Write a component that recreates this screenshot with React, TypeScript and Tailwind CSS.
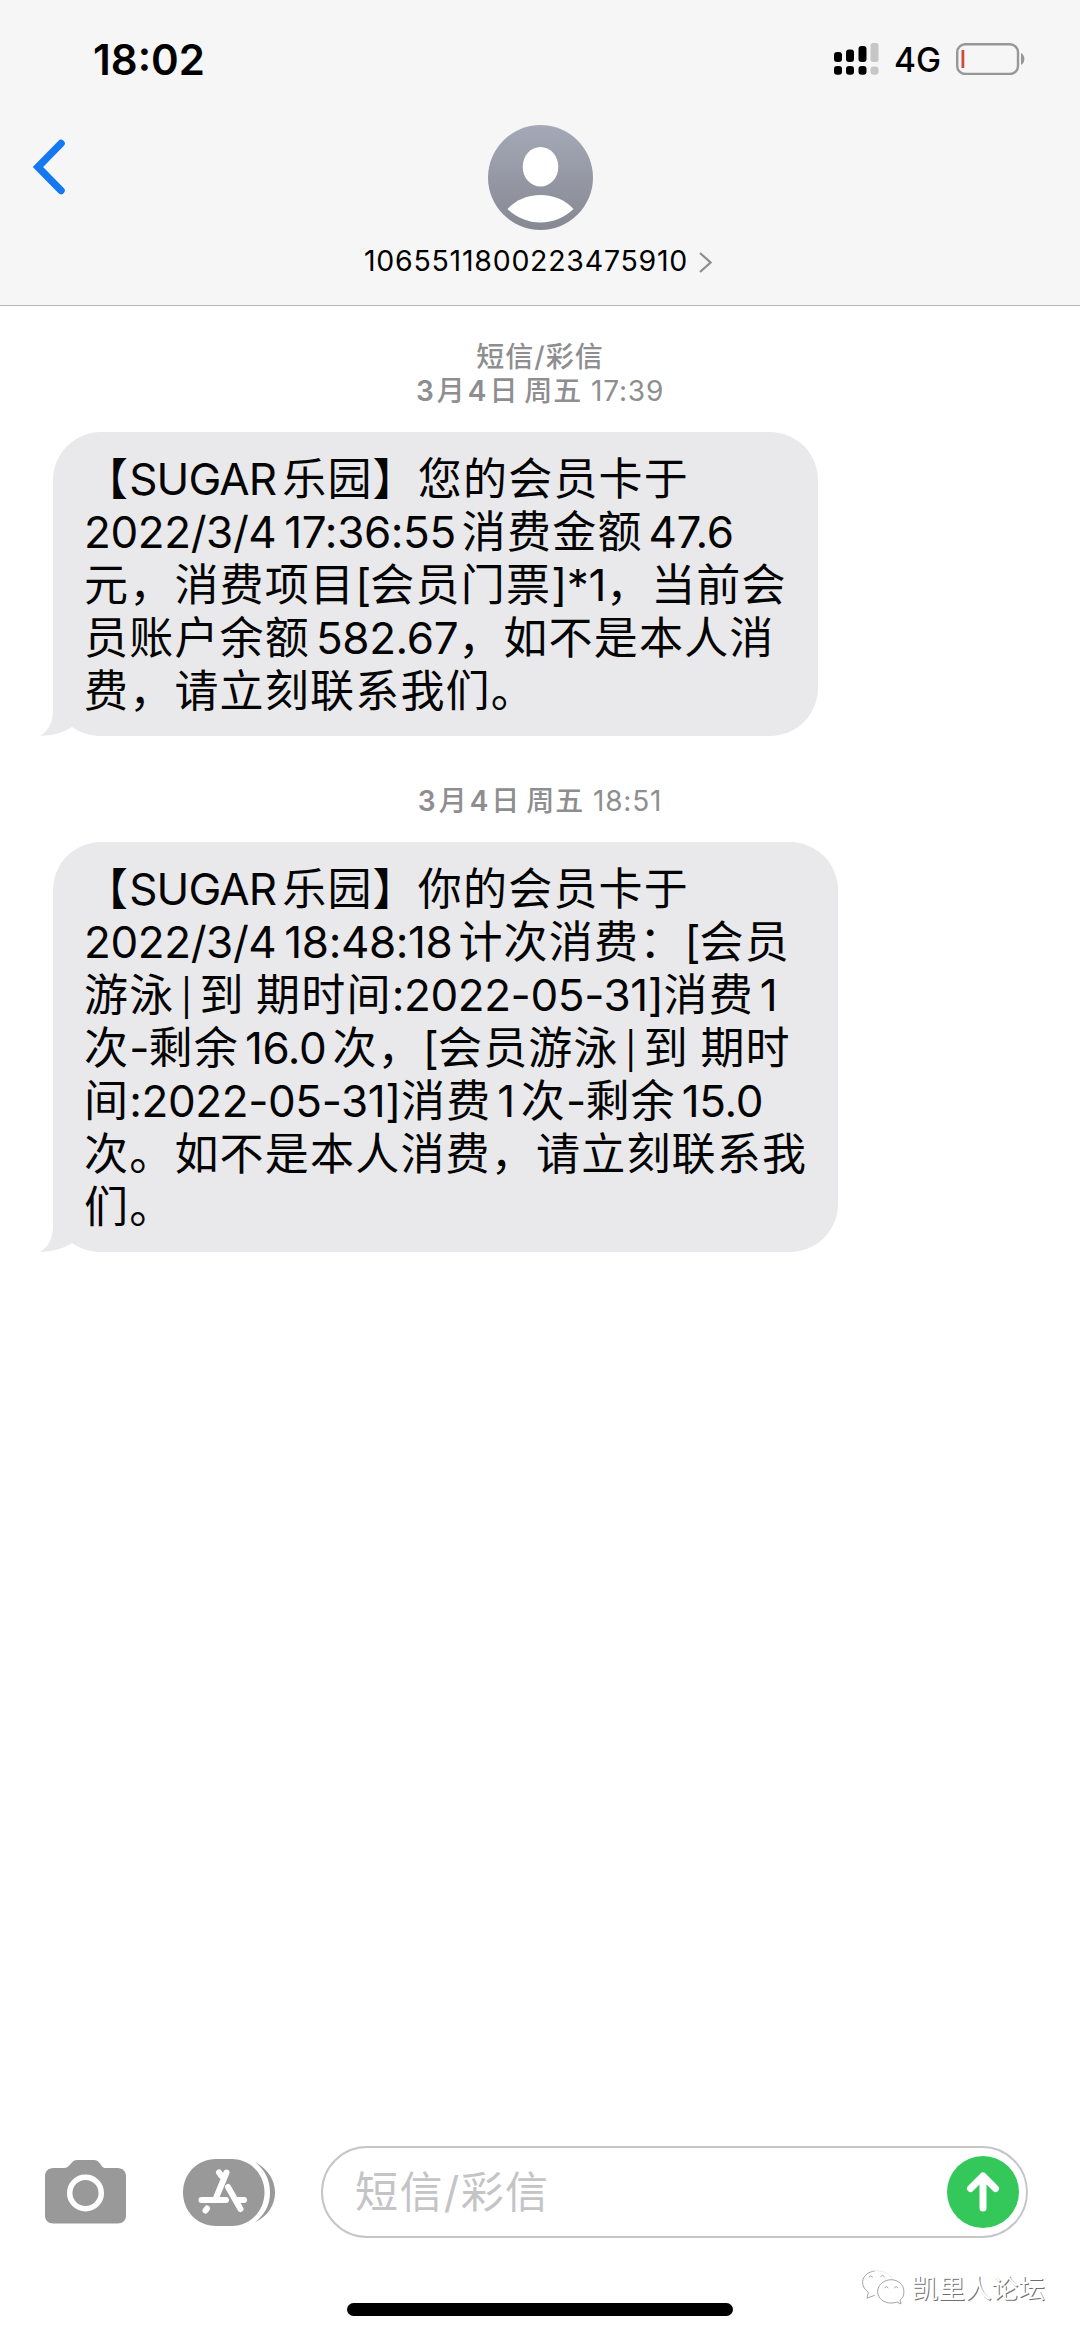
import React from 'react';

const IDEOGRAPH_END = /[\u4e00-\u9fff]$/;
const IDEOGRAPH_START = /^[\u4e00-\u9fff]/;

interface MixedProps {
  text: string;
  letters: string;
  digits: string;
  cjk: string;
  before: string;
  after: string;
}

// Latin runs get their own tracking, plus a small gap where they touch an ideograph
const Mixed: React.FC<MixedProps> = ({ text, letters, digits, cjk, before, after }) => {
  const runs = text.match(/[\x20-\x7e]+|[^\x20-\x7e]+/g) ?? [];
  return (
    <>
      {runs.map((run, i) => {
        if (!/^[\x20-\x7e]/.test(run)) return <span key={i} className={cjk}>{run}</span>;
        if (run === '|') return <span key={i} className="ml-[6px] mr-[7px] text-[36px] leading-none">|</span>;
        const gapLeft = i > 0 && IDEOGRAPH_END.test(runs[i - 1]) && /^\w/.test(run);
        const gapRight = i < runs.length - 1 && IDEOGRAPH_START.test(runs[i + 1]) && /\w$/.test(run);
        return (
          <span
            key={i}
            className={`${/\d/.test(run) ? digits : letters} ${gapLeft ? before : ''} ${gapRight ? after : ''}`}
          >
            {run}
          </span>
        );
      })}
    </>
  );
};

const firstMessage = [
  '【SUGAR乐园】您的会员卡于',
  '2022/3/4 17:36:55消费金额47.6',
  '元，消费项目[会员门票]*1，当前会',
  '员账户余额582.67，如不是本人消',
  '费，请立刻联系我们。',
];

const secondMessage = [
  '【SUGAR乐园】你的会员卡于',
  '2022/3/4 18:48:18计次消费：[会员',
  '游泳|到 期时间:2022-05-31]消费1',
  '次-剩余16.0次，[会员游泳|到 期时',
  '间:2022-05-31]消费1次-剩余15.0',
  '次。如不是本人消费，请立刻联系我',
  '们。',
];

const Bubble: React.FC<{ lines: string[]; className: string }> = ({ lines, className }) => (
  <div className={`relative ml-[53px] rounded-[48px] bg-[#e9e9eb] pl-[31px] pt-[21px] pb-[18px] ${className}`}>
    <svg className="absolute -left-[13px] bottom-0 h-[44px] w-[60px]" viewBox="0 0 60 44">
      <path d="M13 0V18C13 31 8 39 0 44C12 44 23 41 32 35C39 40 47 44 60 44V0Z" fill="#e9e9eb" />
      <path d="M0 44C12 44 23 41 32 35.500C39 40 47 43 58 44Z" fill="#fff" />
    </svg>
    {lines.map((line) => (
      <p key={line} className="relative h-[53px] whitespace-pre text-[44px] leading-[53px] text-[#050505]">
        <Mixed
          text={line}
          letters="tracking-[-0.9px]"
          digits="tracking-[-0.4px] [word-spacing:-4px]"
          cjk="tracking-[1.2px]"
          before="ml-[6px]"
          after="mr-[6px]"
        />
      </p>
    ))}
  </div>
);

const Stamp: React.FC<{ time: string }> = ({ time }) => (
  <p className="text-center text-[28px] leading-[34px] text-[#8e8e90]">
    <Mixed
      text="3月4日 周五"
      letters="[word-spacing:-2px]"
      digits="font-semibold"
      cjk="font-medium tracking-[1px]"
      before="ml-[2px]"
      after="mr-[3px]"
    />
    <span className="tracking-[0.8px]"> {time}</span>
  </p>
);

const StatusBar = () => (
  <div className="flex h-[118px] items-center justify-between pl-[93px] pr-[55px]">
    <span className="text-[42px] font-semibold text-black">18:02</span>
    <div className="flex items-center">
      <svg className="h-[32px] w-[45px]" viewBox="0 0 45 32">
        <rect x="0" y="9" width="8" height="10" rx="3" />
        <rect x="12" y="6.500" width="8" height="12.500" rx="3" />
        <rect x="24.500" y="3" width="8" height="16" rx="3" />
        <rect x="36.500" y="0" width="8" height="19" rx="2.500" fill="#c6c6c6" />
        <rect x="0" y="23" width="8" height="8.800" rx="3" />
        <rect x="12" y="23" width="8" height="8.800" rx="3" />
        <rect x="24.500" y="23" width="8" height="8.800" rx="3" />
        <rect x="36.500" y="23.500" width="8" height="8.300" rx="3" fill="#c6c6c6" />
      </svg>
      <span className="ml-[15px] mt-[2px] w-[62px] text-[33.5px] font-medium leading-[40px] text-black">4G</span>
      <svg className="h-[32px] w-[69px]" viewBox="0 0 69 32" fill="none">
        <rect x="1.200" y="1.200" width="60.800" height="29.800" rx="8" stroke="#979797" strokeWidth="2.400" />
        <rect x="5.500" y="7" width="2.800" height="18" fill="#d04a40" />
        <path d="M65 10C69.500 12 69.500 20 65 22Z" fill="#979797" />
      </svg>
    </div>
  </div>
);

const Header = () => (
  <header className="flex h-[306px] flex-col border-b border-[#b4b4b6] bg-[#f6f6f6]">
    <StatusBar />
    <div className="grid grid-cols-[1fr_auto_1fr] pt-[7px]">
      <svg className="ml-[31px] mt-[14px] h-[56px] w-[36px]" viewBox="0 0 36 56" fill="none">
        <path d="M30 4.500L7 28L30 51.500" stroke="#1478f0" strokeWidth="7.500" strokeLinecap="round" strokeLinejoin="miter" />
      </svg>
      <svg className="h-[105px] w-[105px]" viewBox="0 0 105 105">
        <defs>
          <linearGradient id="avatar" x1="0" y1="0" x2="0" y2="1">
            <stop offset="0" stopColor="#a5a9b7" />
            <stop offset="1" stopColor="#868892" />
          </linearGradient>
        </defs>
        <circle cx="52.500" cy="52.500" r="52.500" fill="url(#avatar)" />
        <ellipse cx="52.500" cy="41.800" rx="17.800" ry="19.800" fill="#fff" />
        <path d="M19.500 84C27 75.500 39 70 52.500 70S78 75.500 85.500 84C76.500 92.500 65 97.500 52.500 97.500S28.500 92.500 19.500 84Z" fill="#fff" />
      </svg>
    </div>
    <div className="flex items-center justify-center pr-[4px] pt-[13px]">
      <span className="text-[28.5px] leading-[36px] tracking-[0.75px] text-black">1065511800223475910</span>
      <svg className="ml-[11px] mt-[3px] h-[21px] w-[13px]" viewBox="0 0 13 21" fill="none">
        <path d="M1 1L11.500 10.500L1 20" stroke="#8e8e92" strokeWidth="2.200" />
      </svg>
    </div>
  </header>
);

const Toolbar = () => (
  <div className="flex h-[92px] items-center pl-[45px] pr-[52px]">
    <svg className="h-[64px] w-[81px]" viewBox="0 0 81 64">
      <path d="M8.500 8H19C22 8 24 6 26 3.500C28 1 29.500 0 32 0H49C51.500 0 53 1 55 3.500C57 6 57.500 8 61 8H72.500C78 8 81 11.500 81 16.500V55C81 60.500 78 63.500 72.500 63.500H8.500C3 63.500 0 60.500 0 55V16.500C0 11.500 3 8 8.500 8Z" fill="#999" />
      <circle cx="40.500" cy="33" r="15.800" fill="none" stroke="#fff" strokeWidth="5.500" />
    </svg>
    <svg className="ml-[57px] h-[67px] w-[93px]" viewBox="0 0 93 67" fill="none">
      <path d="M33 0H49C67 0 81.500 15 81.500 33.500S67 67 49 67H33C14 67 0 52 0 33.500S14 0 33 0Z" fill="#999" />
      <path d="M72 3C85 10 92 21 92 33.500S85 57 72 63.500C82 55 87 46 87 33.500S82 11 72 3Z" fill="#999" />
      <g stroke="#fff" strokeWidth="6" strokeLinecap="round">
        <path d="M43.500 13.500L33 39" />
        <path d="M36 13.500L38.500 17" />
        <path d="M45 28L57.500 50" />
        <path d="M18.500 41H43" />
        <path d="M54 41H61" />
        <path d="M24 49.500L22.500 51.500" />
      </g>
    </svg>
    <div className="ml-[45px] flex h-[92px] flex-1 items-center justify-between rounded-full border-[2.5px] border-[#c6c6c8] bg-white pl-[32px] pr-[7px]">
      <span className="text-[43px] tracking-[1.4px] text-[#c4c4c6]">短信/彩信</span>
      <svg className="h-[72px] w-[72px]" viewBox="0 0 72 72" fill="none">
        <circle cx="36" cy="36" r="36" fill="#34c759" />
        <path d="M36 52V20M23.500 32.500L36 20L48.500 32.500" stroke="#fff" strokeWidth="7" strokeLinecap="round" strokeLinejoin="round" />
      </svg>
    </div>
  </div>
);

const Watermark = () => (
  <div className="absolute right-[35px] top-[32px] flex items-center">
    <svg className="mr-[7px] h-[35px] w-[44px]" viewBox="0 0 45 36" fill="none" stroke="#a0a0a0" strokeWidth="1">
      <path d="M14 26L6 29L7.500 23C-3 15 1 3 14 1" />
      <path d="M14 1C24 0 31 5 32 10" stroke="#ececec" />
      <path d="M44 22C44 15 38 10 31 10S17 15 17 22S23 34 31 34C33 34 35 33.500 37 33L41 35L40 31C43 29 44 26 44 22Z" />
      <path d="M8 7.500Q10 4.500 12 7.500M20 7Q22 4 24 7M24 18.500Q26 15.500 28 18.500M34 18.500Q36 15.500 38 18.500" />
    </svg>
    <span className="text-[26.7px] leading-[34px] text-white [text-shadow:1px_1px_0_#707070]">凯里人论坛</span>
  </div>
);

export default function App() {
  return (
    <div className="flex h-[2337px] w-[1080px] flex-col overflow-hidden bg-white font-['Inter','Noto_Sans_CJK_SC',sans-serif]">
      <Header />
      <main className="flex-1 pt-[34px]">
        <p className="text-center text-[28px] font-medium leading-[34px] tracking-[1px] text-[#8e8e90]">短信/彩信</p>
        <Stamp time="17:39" />
        <div className="mt-[24px]">
          <Bubble lines={firstMessage} className="w-[765px]" />
        </div>
        <div className="mt-[48px]">
          <Stamp time="18:51" />
        </div>
        <div className="mt-[24px]">
          <Bubble lines={secondMessage} className="w-[785px]" />
        </div>
      </main>
      <Toolbar />
      <footer className="relative flex h-[99px] justify-center pt-[65px]">
        <div className="h-[13px] w-[386px] rounded-full bg-black" />
        <Watermark />
      </footer>
    </div>
  );
}
